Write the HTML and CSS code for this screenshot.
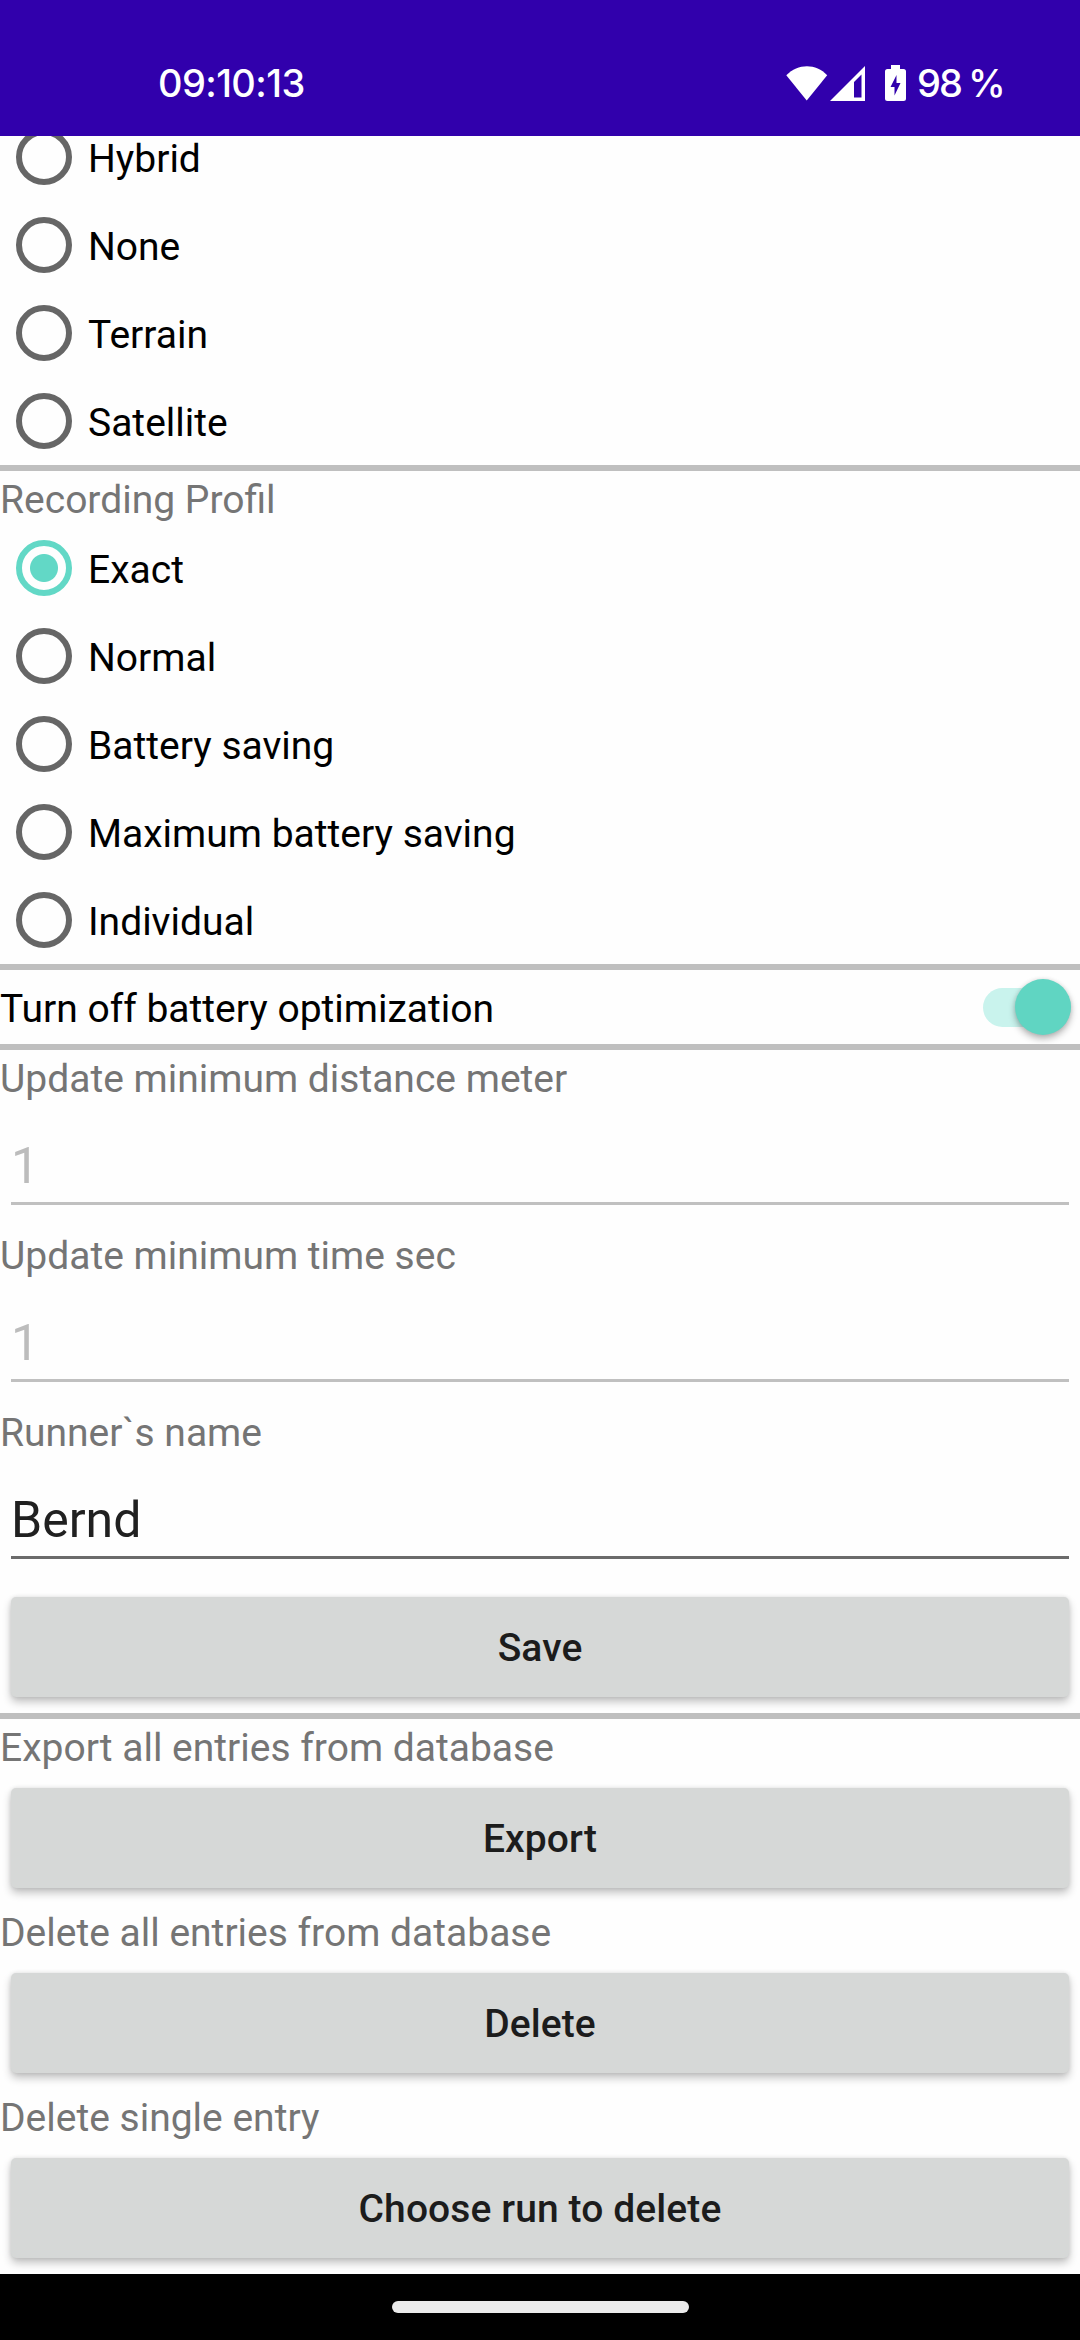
FILE: index.html
```html
<!DOCTYPE html>
<html lang="en">
<head>
<meta charset="utf-8">
<title>Settings</title>
<link rel="stylesheet" href="styles.css">
</head>
<body>
<div class="screen">
  <header class="status">
    <span class="clock">09:10:13</span>
    <div class="status-right">
      <svg class="wifi" width="42" height="35" viewBox="0 0 42 35"><path d="M0.3 9.3C12 -2.8 30 -2.8 41.200 9.300L20.700 34.500Z" fill="#fff"/></svg>
      <svg class="signal" width="35" height="35" viewBox="0 0 35 35"><path fill-rule="evenodd" d="M0 35L35 0V35ZM24 16V31.500H31.500V8.500Z" fill="#fff"/></svg>
      <svg class="battery" width="21" height="36" viewBox="0 0 21 36"><path fill-rule="evenodd" d="M6 0H15V4H18.500Q21 4 21 6.500V33.500Q21 36 18.500 36H2.500Q0 36 0 33.500V6.500Q0 4 2.500 4H6ZM11.500 10L5.500 22H9.500V30.500L15.500 18H11.500Z" fill="#fff"/></svg>
      <span class="percent">98 %</span>
    </div>
  </header>

  <main class="content">
    <div class="radios radios-scrolled">
      <div class="radio"><i class="ring"></i><span>Hybrid</span></div>
      <div class="radio"><i class="ring"></i><span>None</span></div>
      <div class="radio"><i class="ring"></i><span>Terrain</span></div>
      <div class="radio"><i class="ring"></i><span>Satellite</span></div>
    </div>
    <div class="divider"></div>
    <div class="label">Recording Profil</div>
    <div class="radios">
      <div class="radio"><i class="ring checked"></i><span>Exact</span></div>
      <div class="radio"><i class="ring"></i><span>Normal</span></div>
      <div class="radio"><i class="ring"></i><span>Battery saving</span></div>
      <div class="radio"><i class="ring"></i><span>Maximum battery saving</span></div>
      <div class="radio"><i class="ring"></i><span>Individual</span></div>
    </div>
    <div class="divider"></div>
    <div class="switch-row"><span>Turn off battery optimization</span><div class="track"><i class="thumb"></i></div></div>
    <div class="divider"></div>
    <div class="label">Update minimum distance meter</div>
    <div class="field disabled">1</div>
    <div class="label">Update minimum time sec</div>
    <div class="field disabled">1</div>
    <div class="label">Runner`s name</div>
    <div class="field">Bernd</div>
    <div class="button">Save</div>
    <div class="divider"></div>
    <div class="label">Export all entries from database</div>
    <div class="button">Export</div>
    <div class="label">Delete all entries from database</div>
    <div class="button">Delete</div>
    <div class="label">Delete single entry</div>
    <div class="button">Choose run to delete</div>
  </main>

  <footer class="nav"><i class="pill"></i></footer>
</div>
</body>
</html>
```
FILE: styles.css
```css
* { box-sizing: border-box; }
body { margin: 0; background: #fff; }
.screen {
  width: 1080px;
  height: 2340px;
  display: flex;
  flex-direction: column;
  overflow: hidden;
  font-family: Roboto, sans-serif;
  font-size: 39px;
  color: #000;
}
.status {
  flex: none;
  height: 136px;
  padding: 30px 78px 0 158px;
  display: flex;
  align-items: center;
  justify-content: space-between;
  background: #3100ac;
  color: #fff;
  font-family: Inter, sans-serif;
  font-weight: 500;
  font-size: 38px;
}
.clock { letter-spacing: -0.6px; }
.status-right { display: flex; align-items: center; }
.signal { margin-left: 2px; }
.battery { margin-left: 20px; }
.percent {
  width: 85px;
  margin-left: 11px;
  letter-spacing: -2px;
  word-spacing: -1px;
  white-space: nowrap;
}
.content {
  flex: none;
  height: 2138px;
  display: flex;
  flex-direction: column;
  overflow: hidden;
  background: #fefefe;
}
.content > * { flex: none; }
.radios-scrolled { margin-top: -23px; }
.radio {
  height: 88px;
  padding-left: 16px;
  display: flex;
  align-items: center;
}
.radio span { padding-top: 3px; margin-left: 16px; }
.ring {
  width: 56px;
  height: 56px;
  border: 6px solid #666;
  border-radius: 50%;
}
.ring.checked {
  border-color: #62d8c6;
  background: radial-gradient(circle, #62d8c6 13.5px, transparent 14.5px);
}
.divider { height: 6px; background: #bfbfbf; }
.label {
  height: 53px;
  padding-top: 5px;
  line-height: 48px;
  color: #757575;
}
.switch-row {
  height: 74px;
  padding-right: 9px;
  display: flex;
  align-items: center;
  justify-content: space-between;
}
.switch-row span { padding-top: 3px; }
.track {
  width: 88px;
  height: 39px;
  display: flex;
  align-items: center;
  justify-content: flex-end;
  border-radius: 20px;
  background: #c9f3ed;
}
.thumb {
  width: 56px;
  height: 56px;
  flex: none;
  border-radius: 50%;
  background: #60d5c2;
  box-shadow: 0 4px 7px rgba(0, 0, 0, .28), 0 0 4px rgba(0, 0, 0, .1);
}
.field {
  height: 102px;
  margin: 0 11px 22px;
  padding-top: 27px;
  line-height: 72px;
  font-size: 50px;
  color: #202020;
  border-bottom: 3px solid #6b6b6b;
}
.field.disabled { color: #bcbcbc; border-bottom-color: #c0c0c0; }
.button {
  height: 100px;
  margin: 16px 11px;
  padding-top: 3px;
  line-height: 97px;
  text-align: center;
  font-weight: 500;
  letter-spacing: .1px;
  color: #1c1c1c;
  border-radius: 5px;
  background: #d6d8d7;
  box-shadow: 0 5px 8px rgba(0, 0, 0, .24), 0 0 4px rgba(0, 0, 0, .1);
}
.nav {
  flex: none;
  height: 66px;
  display: flex;
  align-items: center;
  justify-content: center;
  background: #000;
}
.pill { width: 297px; height: 12px; border-radius: 6px; background: #ebebeb; }
```
